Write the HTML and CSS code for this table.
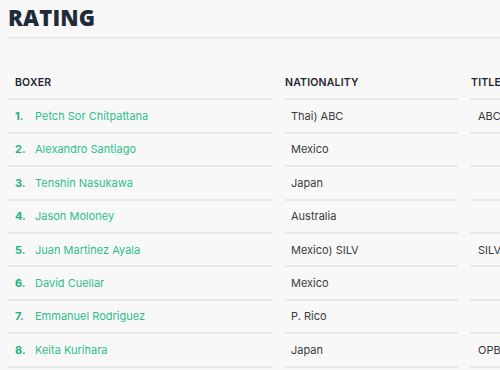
FILE: index.html
```html
<!DOCTYPE html>
<html>
<head>
<meta charset="utf-8">
<link rel="stylesheet" href="styles.css">
</head>
<body>
<div class="page">
  <h1 class="title">RATING</h1>
  <div class="rule"></div>
  <div class="table">
    <div class="cell head c1">BOXER</div>
    <div class="cell head c2">NATIONALITY</div>
    <div class="cell head c3">TITLE</div>

    <div class="cell c1"><span class="num">1.</span><span class="name">Petch Sor Chitpattana</span></div>
    <div class="cell c2">Thai) ABC</div>
    <div class="cell c3">ABCO Champion</div>

    <div class="cell c1"><span class="num">2.</span><span class="name">Alexandro Santiago</span></div>
    <div class="cell c2">Mexico</div>
    <div class="cell c3"></div>

    <div class="cell c1"><span class="num">3.</span><span class="name">Tenshin Nasukawa</span></div>
    <div class="cell c2">Japan</div>
    <div class="cell c3"></div>

    <div class="cell c1"><span class="num">4.</span><span class="name">Jason Moloney</span></div>
    <div class="cell c2">Australia</div>
    <div class="cell c3"></div>

    <div class="cell c1"><span class="num">5.</span><span class="name">Juan Martinez Ayala</span></div>
    <div class="cell c2">Mexico) SILV</div>
    <div class="cell c3">SILVER Champion</div>

    <div class="cell c1"><span class="num">6.</span><span class="name">David Cuellar</span></div>
    <div class="cell c2">Mexico</div>
    <div class="cell c3"></div>

    <div class="cell c1"><span class="num">7.</span><span class="name">Emmanuel Rodriguez</span></div>
    <div class="cell c2">P. Rico</div>
    <div class="cell c3"></div>

    <div class="cell c1"><span class="num">8.</span><span class="name">Keita Kurihara</span></div>
    <div class="cell c2">Japan</div>
    <div class="cell c3">OPBF Champion</div>
  </div>
</div>
</body>
</html>
```

FILE: styles.css
```css
html, body {
  margin: 0;
  padding: 0;
  background: #f8f8f8;
  overflow: hidden;
}
.page {
  width: 700px;
  padding-left: 7px;
  font-family: "Inter", "DejaVu Sans", sans-serif;
}
.title {
  margin: 0;
  padding: 3px 0 0 1px;
  height: 34px;
  font-family: "Open Sans", sans-serif;
  font-weight: 800;
  font-size: 22px;
  line-height: 28px;
  letter-spacing: 0.2px;
  color: #1f2b38;
}
.rule {
  height: 2px;
  background: #ebebeb;
  margin-bottom: 28px;
}
.table {
  display: grid;
  grid-template-columns: 265px 173px 220px;
  column-gap: 12px;
  margin-left: 1px;
}
.cell {
  height: 31.4px;
  border-bottom: 2px solid #e9e9e9;
  display: flex;
  align-items: center;
  font-size: 11px;
  color: #3a3a3a;
  white-space: nowrap;
  overflow: hidden;
}
.head {
  font-weight: 600;
  font-size: 10.5px;
  color: #1f2430;
  letter-spacing: 0.2px;
}
.head.c1 { padding-left: 7px; }
.head.c2 { padding-left: 0; }
.head.c3 { padding-left: 1px; }
.c1 { padding-left: 7px; }
.c2 { padding-left: 6px; }
.c3 { padding-left: 8px; }
.num {
  width: 20px;
  font-weight: 700;
  color: #22b07d;
}
.name {
  color: #2fbf8c;
}
```
